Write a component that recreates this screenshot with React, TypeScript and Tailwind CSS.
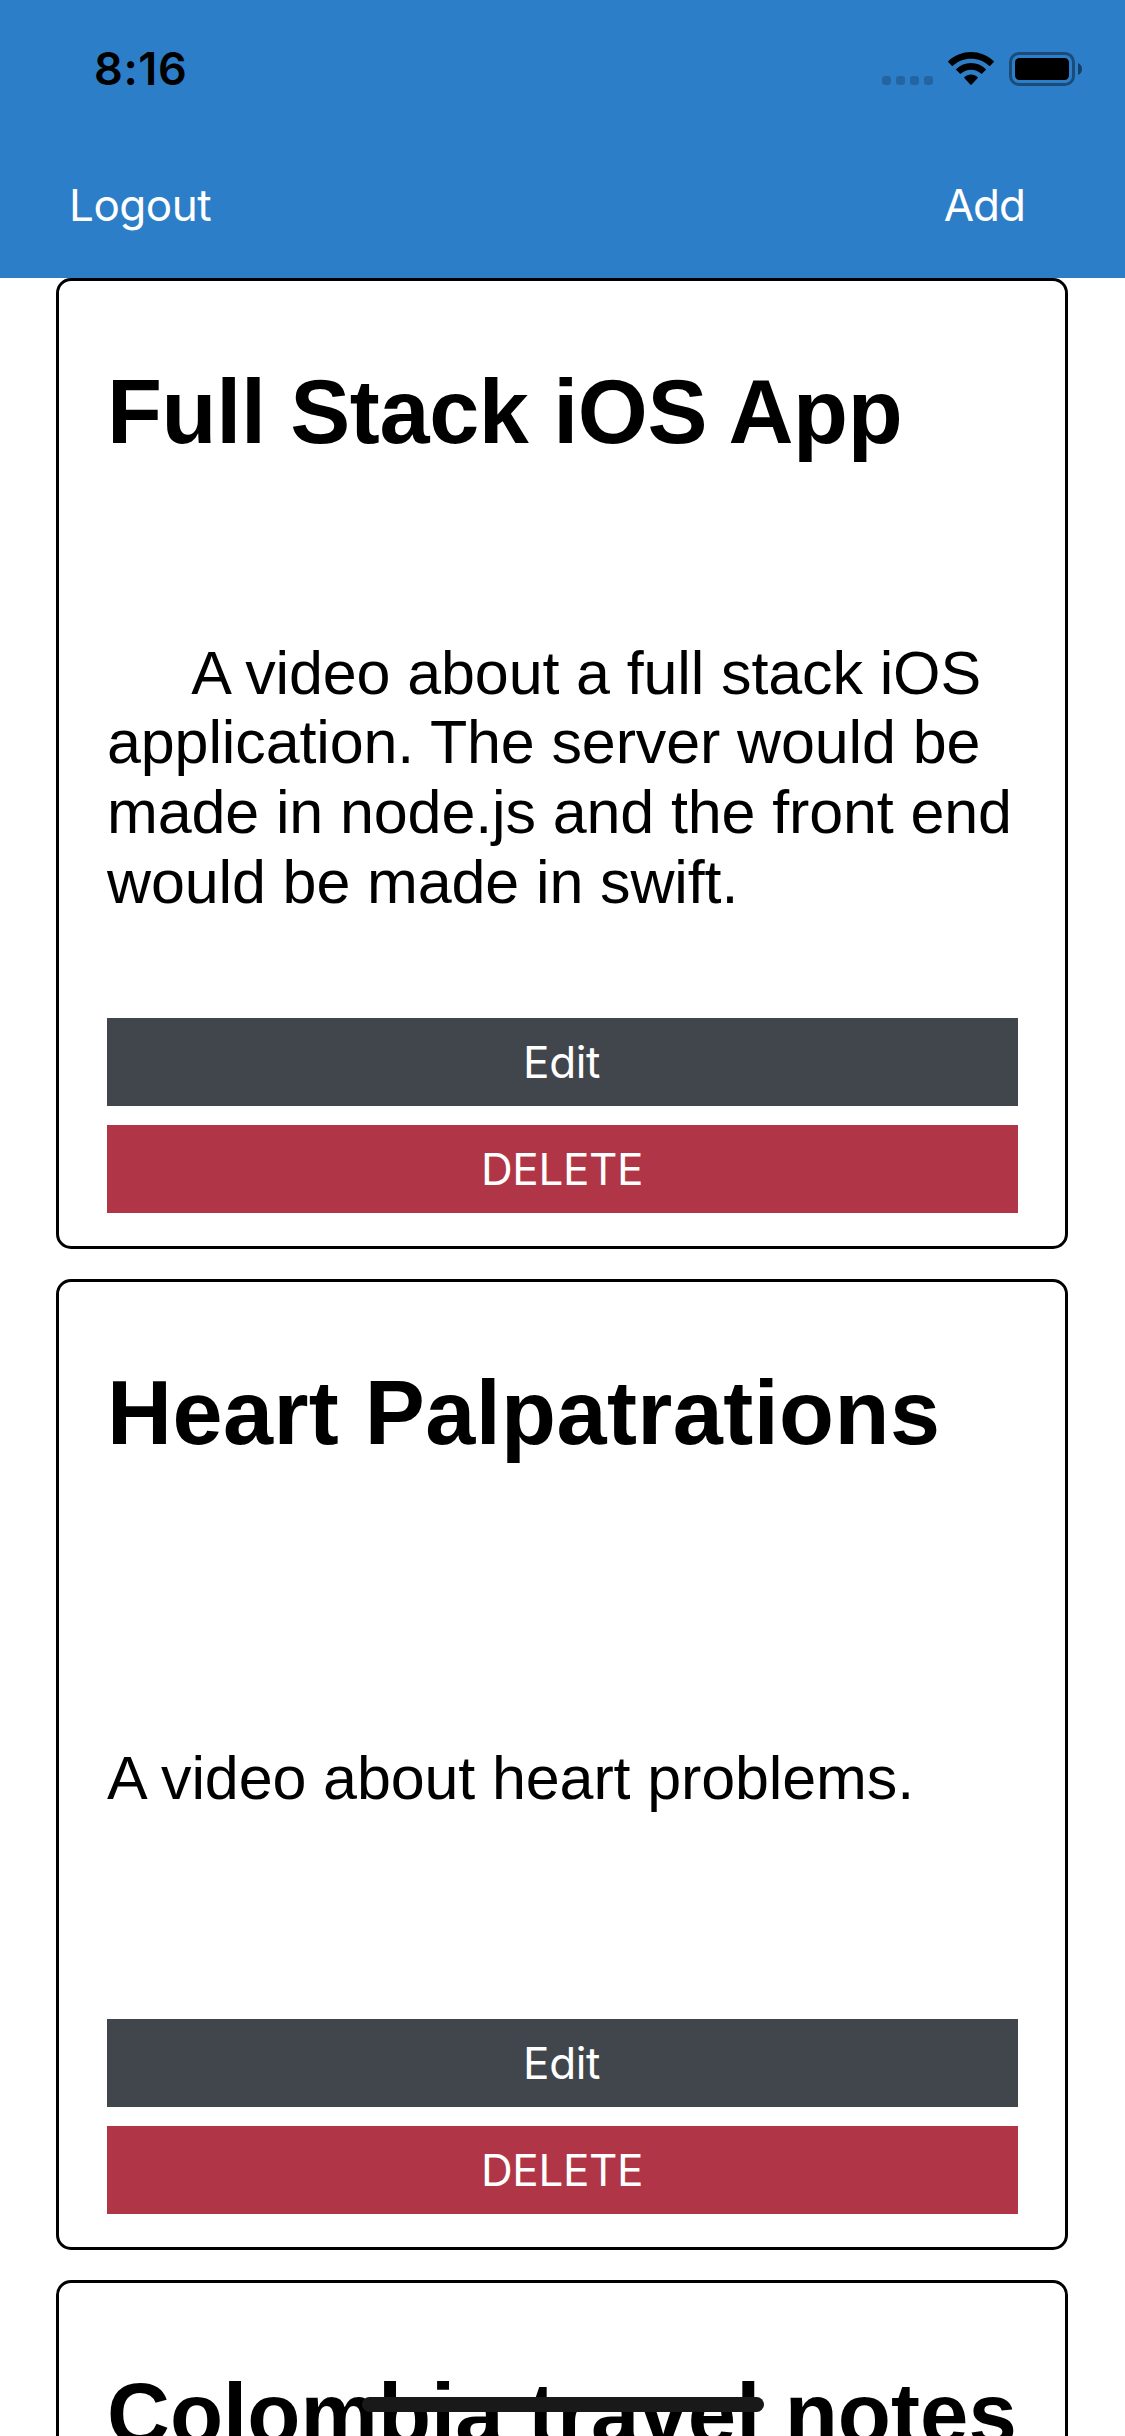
const inter = 'font-["Inter",sans-serif]';

interface Note {
  title: string;
  body: string;
  titleClass: string;
}

const notes: Note[] = [
  {
    title: 'Full Stack iOS App',
    body: '     A video about a full stack iOS application. The server would be made in node.js and the front end would be made in swift.',
    titleClass: 'text-[90px] tracking-[-0.36px]',
  },
  {
    title: 'Heart Palpatrations',
    body: 'A video about heart problems.',
    titleClass: 'text-[90px] tracking-[0.43px]',
  },
  {
    title: 'Colombia travel notes',
    body: '',
    titleClass: 'text-[87px] tracking-[0.05px]',
  },
];

function SignalDots() {
  return (
    <div className="mt-6 flex gap-[5px]">
      {[0, 1, 2, 3].map((dot) => (
        <span key={dot} className="h-[9px] w-[9px] rounded-[3px] bg-black/20" />
      ))}
    </div>
  );
}

function WifiIcon() {
  return (
    <svg width="46" height="33" viewBox="0 0 46 33" className="ml-[15px]">
      <path d="M23 0C31.700 0 39.700 3.400 45.600 9.100Q46.200 9.700 45.600 10.300L42.200 13.800Q41.600 14.400 41 13.800C36.200 9.400 29.900 6.800 23 6.800S9.800 9.400 5 13.800Q4.400 14.400 3.800 13.800L.4 10.300Q-.2 9.700 .4 9.100C6.300 3.400 14.300 0 23 0Z" />
      <path d="M23 11C28.700 11 33.900 13.200 37.700 16.900Q38.300 17.500 37.700 18.100L34.200 21.600Q33.600 22.200 33 21.600C30.300 19.200 26.800 17.700 23 17.700S15.700 19.200 13 21.600Q12.400 22.200 11.800 21.600L8.300 18.100Q7.700 17.500 8.300 16.900C12.100 13.200 17.300 11 23 11Z" />
      <path d="M23 22.500C25.500 22.500 27.800 23.500 29.500 25.100Q30.100 25.700 29.500 26.300L23.700 32.400Q23 33 22.300 32.400L16.500 26.300Q15.900 25.700 16.500 25.100C18.200 23.500 20.500 22.500 23 22.500Z" />
    </svg>
  );
}

function BatteryIcon() {
  return (
    <svg width="74" height="34" viewBox="0 0 74 34" className="ml-[15px]">
      <rect x="1.500" y="1.500" width="63" height="31" rx="8.500" fill="none" stroke="#000" strokeOpacity=".4" strokeWidth="3" />
      <rect x="6" y="6" width="54" height="22" rx="4.500" />
      <path d="M69 11C71.500 12 73 14.200 73 17S71.500 22 69 23Z" fillOpacity=".5" />
    </svg>
  );
}

function Header() {
  return (
    <header className={`flex h-[278px] flex-col bg-[#2d7ec8] ${inter}`}>
      <div className="flex h-[132px] items-start justify-between pl-[94px] pr-[42px] pt-[52px]">
        <span className="-mt-[7px] text-[45px] font-semibold leading-[48px] tracking-[0.6px] text-black">8:16</span>
        <div className="flex">
          <SignalDots />
          <WifiIcon />
          <BatteryIcon />
        </div>
      </div>
      <nav className="flex items-center justify-between pl-[69px] pr-[101px] pt-[46px] text-[44px] leading-[54px] text-white">
        <button className="tracking-[-0.5px]">Logout</button>
        <button className="-mr-[1px] tracking-[-1px]">Add</button>
      </nav>
    </header>
  );
}

function NoteCard({ title, body, titleClass }: Note) {
  return (
    <article className="flex h-[971px] w-[1012px] shrink-0 flex-col rounded-[15px] border-[3px] border-black bg-white px-[48px] pb-[33px] pt-[79px]">
      <h2 className={`whitespace-nowrap font-bold leading-[104px] ${titleClass}`}>{title}</h2>
      <div className="flex h-[554px] items-center pt-[74px]">
        <p className="w-full whitespace-pre-wrap text-[61px] leading-[69.700px] tracking-[-0.12px]">{body}</p>
      </div>
      <div className={`flex w-[911px] flex-col gap-[19px] text-[44px] tracking-[-0.4px] text-white ${inter}`}>
        <button className="h-[88px] bg-[#41454c] pr-[2px]">Edit</button>
        <button className="h-[88px] bg-[#b03647] pr-[1px]">DELETE</button>
      </div>
    </article>
  );
}

export default function App() {
  return (
    <div className='relative h-[2436px] w-[1125px] overflow-hidden bg-white font-["Liberation_Sans",Arial,sans-serif] text-black'>
      <Header />
      <main className="flex flex-col gap-[30px] pl-[56px]">
        {notes.map((note) => (
          <NoteCard key={note.title} {...note} />
        ))}
      </main>
      <div className="absolute bottom-[24px] left-[362px] h-[15px] w-[402px] rounded-full bg-[#191919]" />
    </div>
  );
}
